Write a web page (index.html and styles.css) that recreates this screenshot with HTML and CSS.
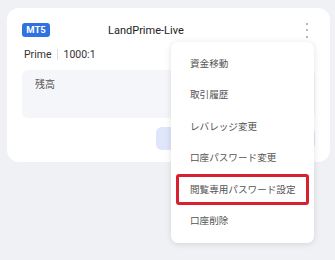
FILE: index.html
```html
<!DOCTYPE html>
<html lang="ja">
<head>
  <meta charset="UTF-8">
  <title>LandPrime-Live</title>
  <link rel="stylesheet" href="styles.css">
</head>
<body>

  <div class="page">
    <div class="account-card">
      <div class="card-head">
        <span class="badge">MT5</span>
        <span class="title">LandPrime-Live</span>
        <button class="kebab" aria-label="menu">
          <i></i><i></i><i></i>
        </button>
      </div>
      <div class="meta">
        <span>Prime</span>
        <span class="sep"></span>
        <span>1000:1</span>
      </div>
      <div class="balance">
        <span>残高</span>
      </div>
      <div class="actions">
        <button class="action-btn"></button>
      </div>

      <ul class="menu">
        <li>資金移動</li>
        <li>取引履歴</li>
        <li>レバレッジ変更</li>
        <li>口座パスワード変更</li>
        <li class="marked">閲覧専用パスワード設定</li>
        <li>口座削除</li>
      </ul>
    </div>
  </div>

</body>
</html>
```

FILE: styles.css
```css
html, body {
  margin: 0;
  height: 100%;
}
body {
  background: #f0f1f5;
  font-family: Roboto, "Noto Sans CJK JP", sans-serif;
  color: #333;
}
.page {
  padding: 8px 5px 0 7px;
  min-height: 260px;
  box-sizing: border-box;
}
.account-card {
  position: relative;
  background: #fff;
  border-radius: 12px;
  padding: 15px 15px 12px 15px;
  height: 127px;
}
.card-head {
  display: flex;
  align-items: center;
  height: 14px;
}
.badge {
  background: #2f72e0;
  color: #fff;
  font-size: 9.5px;
  font-weight: bold;
  width: 28px;
  height: 14px;
  line-height: 14px;
  text-align: center;
  border-radius: 3px;
}
.title {
  margin-left: 58px;
  font-size: 11px;
  color: #222;
}
.kebab {
  margin-left: auto;
  margin-right: 7px;
  border: none;
  background: none;
  padding: 0;
  display: flex;
  flex-direction: column;
  gap: 4.5px;
  cursor: pointer;
}
.kebab i {
  display: block;
  width: 2px;
  height: 2px;
  border-radius: 50%;
  background: #9aa1ad;
}
.meta {
  display: flex;
  align-items: center;
  margin-top: 11px;
  padding-left: 2px;
  font-size: 10.5px;
  color: #333;
}
.sep {
  width: 1px;
  height: 11px;
  background: #ddd;
  margin: 0 6px 0 5px;
}
.balance {
  margin-top: 9px;
  height: 36px;
  background: #f5f6f9;
  border-radius: 6px;
  padding: 6px 13px;
  font-size: 10px;
  color: #555;
}
.actions {
  display: flex;
  justify-content: flex-end;
  margin-top: 9px;
}
.action-btn {
  width: 159px;
  height: 23px;
  border: none;
  border-radius: 6px;
  background: #dfe6fb;
}
.menu {
  position: absolute;
  z-index: 10;
  top: 34px;
  left: 164px;
  width: 143px;
  margin: 0;
  padding: 6px 0 7px;
  list-style: none;
  background: #fff;
  border-radius: 7px;
  box-shadow: 0 1px 6px rgba(0, 0, 0, 0.12);
}
.menu li {
  margin: 0 5px;
  height: 31.4px;
  line-height: 25px;
  padding-left: 11px;
  border: 3px solid transparent;
  box-sizing: border-box;
  border-radius: 3px;
  font-size: 9.6px;
  color: #555;
}
.menu li.marked {
  border-color: #d9202e;
}
```
